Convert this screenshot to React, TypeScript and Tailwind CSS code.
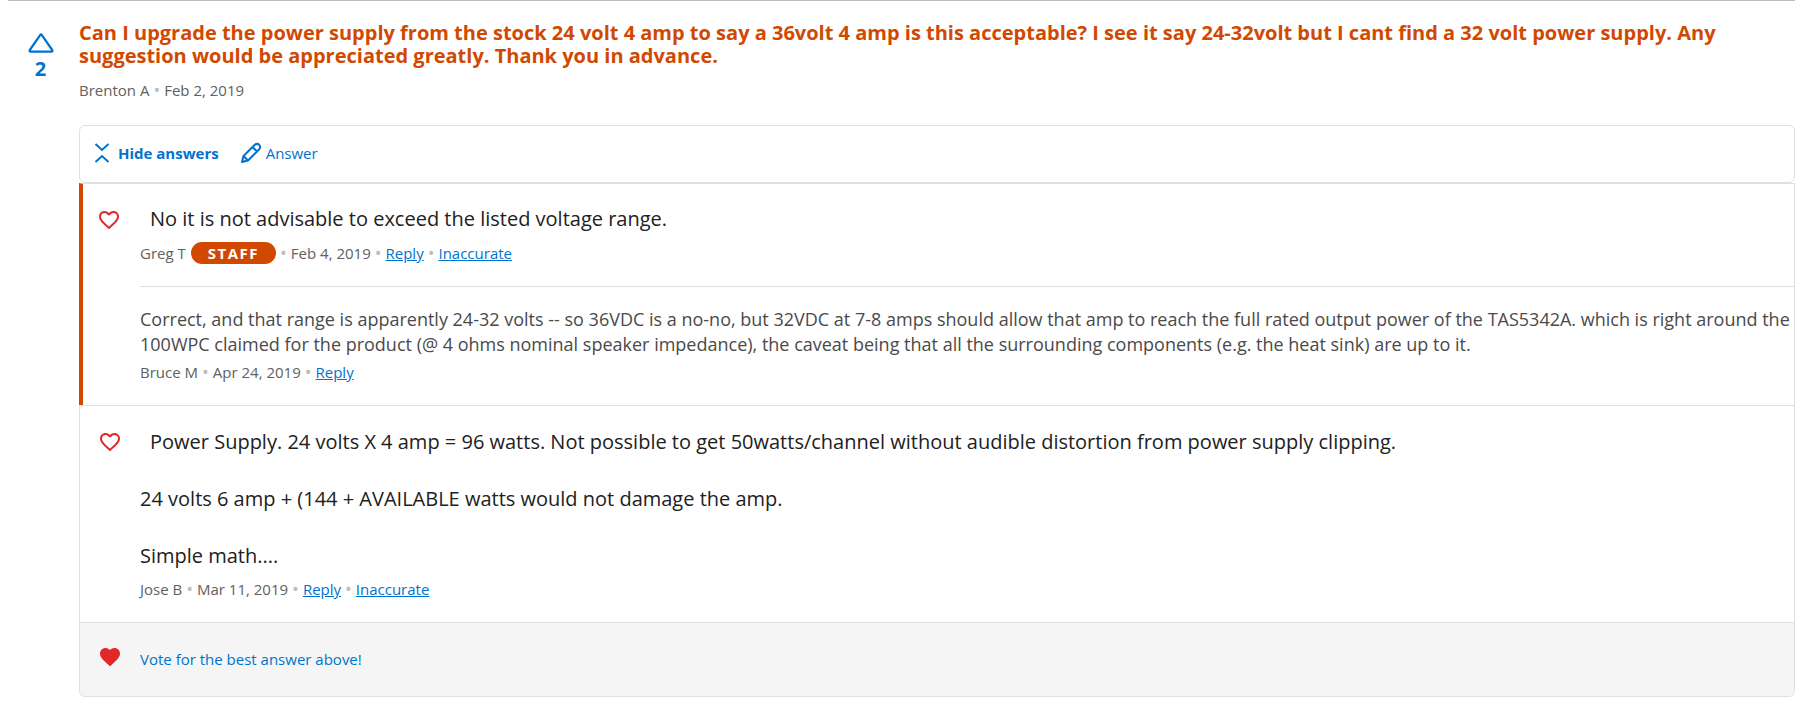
import React from "react";
import { MdFavorite, MdFavoriteBorder } from "react-icons/md";

const Dot = () => <span className="px-1 text-lg leading-none text-[#bdbdbd]">•</span>;

const TextLink = ({ children }: { children: React.ReactNode }) => (
  <a href="#" className="text-[#0073cf] underline">{children}</a>
);

function Meta({ author, date, staff, flag }: {
  author: string; date: string; staff?: boolean; flag?: boolean;
}) {
  return (
    <div className="flex items-center text-[15px] leading-[22px] text-[#616161]">
      <span>{author}</span>
      {staff && (
        <span className="ml-[5px] rounded-full bg-[#d14900] px-[17px] text-[15px] font-bold tracking-widest text-white">STAFF</span>
      )}
      <Dot />
      <span>{date}</span>
      <Dot />
      <TextLink>Reply</TextLink>
      {flag && (<><Dot /><TextLink>Inaccurate</TextLink></>)}
    </div>
  );
}

const HeartButton = () => (
  <button type="button" aria-label="Vote for this answer" className="mt-[2px] h-6 w-6 shrink-0 text-[#e02828]">
    <MdFavoriteBorder size={24} />
  </button>
);

export default function App() {
  return (
    <main className="mr-[23px] ml-2 flex border-t border-[#bdbdbd] bg-white pt-5 pb-3.5 font-['Open_Sans',sans-serif]">
      <button type="button" aria-label="Upvote question, 2 votes" className="mt-3 ml-5 flex w-[25px] shrink-0 flex-col items-center self-start text-[#0073cf]">
        <svg width="26" height="20" viewBox="0 0 26 20" fill="none" stroke="currentColor" strokeWidth="2.2" strokeLinejoin="round">
          <path d="M12.300 1.800Q13 .9 13.700 1.800L24.200 17Q25 18.700 23.400 18.700H2.600Q1 18.700 1.800 17Z" />
        </svg>
        <span className="mt-1 text-xl leading-6 font-bold">2</span>
      </button>
      <div className="ml-[26px] min-w-0 flex-1">
        <h2 className="text-xl leading-[23px] font-bold text-[#d14900]">
          Can I upgrade the power supply from the stock 24 volt 4 amp to say a 36volt 4 amp is this acceptable? I see it say 24-32volt but I cant find a 32 volt power supply. Any suggestion would be appreciated greatly. Thank you in advance.
        </h2>
        <div className="mt-3 flex items-center text-[15px] leading-[22px] text-[#616161]">
          <span>Brenton A</span>
          <Dot />
          <span>Feb 2, 2019</span>
        </div>

        <div className="mt-6 flex rounded-md border border-[#e0e0e0] pt-4 pb-[18px] pl-3.5 text-[15px] leading-[22px] text-[#0073cf]">
          <button type="button" className="flex items-center gap-2 font-bold">
            <svg width="16" height="20" viewBox="0 0 16 20" fill="none" stroke="currentColor" strokeWidth="2">
              <path d="M1.500 1 8 7l6.500-6M1.500 19 8 13l6.500 6" />
            </svg>
            Hide answers
          </button>
          <button type="button" className="ml-[21px] flex items-center gap-1">
            <svg width="22" height="22" viewBox="0 0 22 22" fill="none" stroke="currentColor" strokeWidth="2" strokeLinejoin="round">
              <path d="M2 20l1.500-6L14.500 3Q17 .8 19.200 2.800 21.200 5 19 7.500L8 18.500zM12.500 5l4.500 4.500M3.500 14l4.500 4.500" />
            </svg>
            Answer
          </button>
        </div>

        <section>
          <article className="flex border-t border-r border-l-4 border-[#e0e0e0] border-l-[#d14900] pl-3.5">
            <div className="pt-[22px]"><HeartButton /></div>
            <div className="ml-[19px] min-w-0 flex-1">
              <div className="space-y-[9px] border-b border-[#e0e0e0] pt-[21px] pb-[22px]">
                <p className="indent-[10px] text-xl leading-7 text-[#212121]">No it is not advisable to exceed the listed voltage range.</p>
                <Meta author="Greg T" date="Feb 4, 2019" staff flag />
              </div>
              <div className="space-y-1 pt-5 pb-[22px]">
                <p className="text-lg leading-[25px] text-[#4a4a4a]">
                  Correct, and that range is apparently 24-32 volts -- so 36VDC is a no-no, but 32VDC at 7-8 amps should allow that amp to reach the full rated output power of the TAS5342A. which is right around the 100WPC claimed for the product (@ 4 ohms nominal speaker impedance), the caveat being that all the surrounding components (e.g. the heat sink) are up to it.
                </p>
                <Meta author="Bruce M" date="Apr 24, 2019" />
              </div>
            </div>
          </article>
          <article className="flex border border-b-0 border-[#e0e0e0] pt-[22px] pb-[22px] pl-[18px]">
            <HeartButton />
            <div className="ml-[18px] min-w-0 flex-1 space-y-2">
              <div className="space-y-[29px] text-xl leading-7 text-[#212121]">
                <p className="indent-[10px]">Power Supply. 24 volts X 4 amp = 96 watts. Not possible to get 50watts/channel without audible distortion from power supply clipping.</p>
                <p>24 volts 6 amp + (144 + AVAILABLE watts would not damage the amp.</p>
                <p>Simple math....</p>
              </div>
              <Meta author="Jose B" date="Mar 11, 2019" flag />
            </div>
          </article>
          <div className="flex items-start gap-[18px] rounded-b-md border border-[#e0e0e0] bg-[#f5f5f5] pt-[22px] pb-[23px] pl-[18px] text-[15px] leading-7">
            <MdFavorite size={24} className="text-[#e02828]" />
            <a href="#" className="text-[#0073cf]">Vote for the best answer above!</a>
          </div>
        </section>
      </div>
    </main>
  );
}
